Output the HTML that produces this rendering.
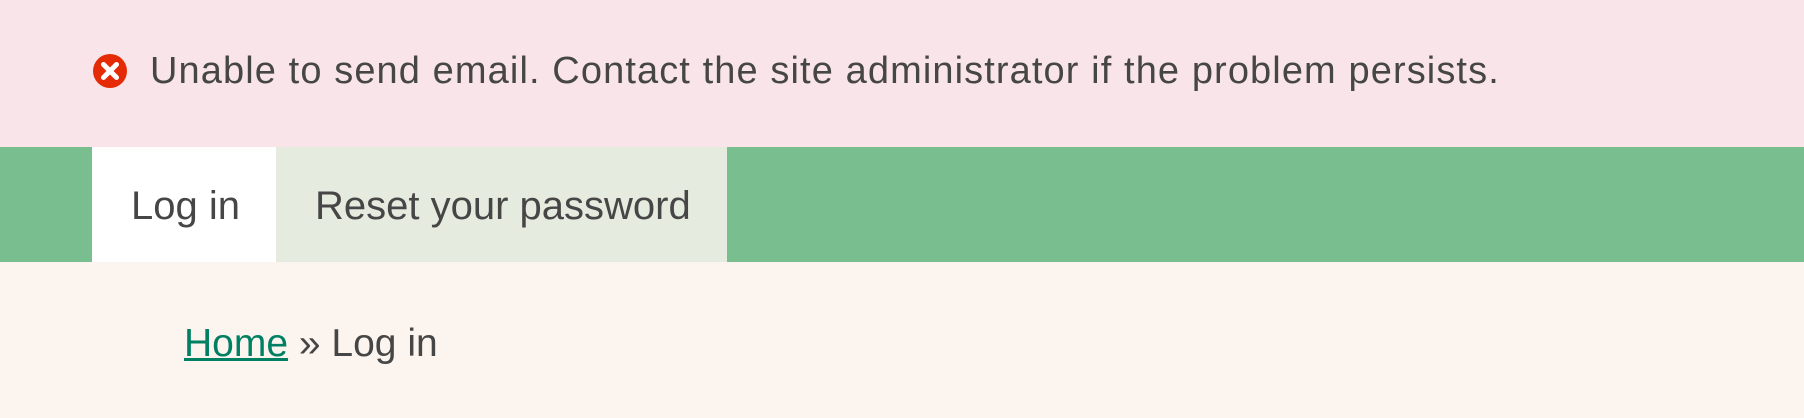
<!DOCTYPE html>
<html><head><style>
body{margin:0;width:1804px;height:418px;overflow:hidden;background:#fcf4ee;font-family:"Liberation Sans",sans-serif;color:#464646;position:relative}
.msg{position:absolute;left:0;top:0;width:1804px;height:147px;background:#f9e5e9}
.msg svg{position:absolute;left:93px;top:54px}
.msg span{position:absolute;left:150px;top:50px;font-size:38px;white-space:nowrap;letter-spacing:1.1px}
.tabs{position:absolute;left:0;top:147px;width:1804px;height:115px;background:#79be8f}
.t1{position:absolute;left:92px;top:0;width:184px;height:115px;background:#fff}
.t2{position:absolute;left:276px;top:0;width:451px;height:115px;background:#e6ebe0}
.tabs span{position:absolute;top:37px;font-size:40px;white-space:nowrap}
.bc{position:absolute;left:184px;top:322px;font-size:39px;white-space:nowrap}
.bc a{color:#008063;text-decoration:underline}
</style></head><body>
<div class="msg"><svg width="34" height="34" viewBox="0 0 34 34"><circle cx="17" cy="17" r="17" fill="#e42b05"/><path d="M10.5 10.5L23.5 23.5M23.5 10.5L10.5 23.5" stroke="#fff" stroke-width="5" stroke-linecap="round"/></svg><span>Unable to send email. Contact the site administrator if the problem persists.</span></div>
<div class="tabs"><div class="t1"></div><div class="t2"></div><span style="left:131px">Log in</span><span style="left:315px">Reset your password</span></div>
<div class="bc"><a>Home</a> » Log in</div>
</body></html>
